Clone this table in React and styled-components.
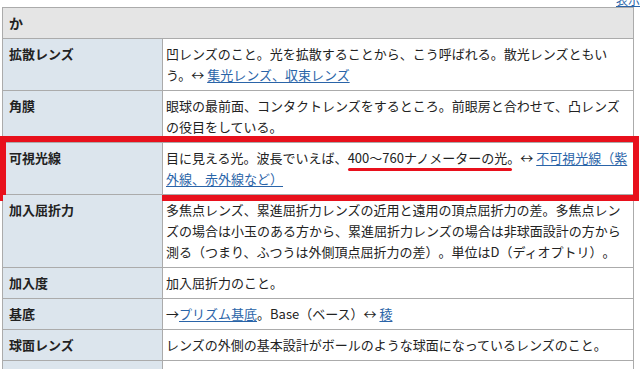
import React from "react";
import styled, { createGlobalStyle } from "styled-components";

const GlobalStyle = createGlobalStyle`
  html, body {
    margin: 0;
    padding: 0;
    overflow: hidden;
    background: #ffffff;
  }
  body {
    font-family: "Noto Sans CJK JP", "Noto Sans", sans-serif;
    color: #222222;
    text-spacing-trim: space-all;
  }
`;

const Page = styled.div`
  padding: 0 6px 0 2px;
`;

const TopBar = styled.div`
  height: 7px;
  display: flex;
  justify-content: flex-end;
  align-items: flex-end;
  overflow: hidden;
  margin-right: -6px;
`;

const TopLink = styled.a`
  font-size: 12px;
  line-height: 14px;
  color: #2a64a8;
  text-decoration: underline;
`;

const Table = styled.table`
  width: 632px;
  border-collapse: collapse;
  table-layout: fixed;
  font-size: 13px;
  line-height: 21px;
`;

const HeadCell = styled.th`
  background: #e5e5e5;
  border: 1px solid #ababab;
  text-align: left;
  font-size: 14px;
  font-weight: bold;
  padding: 5px 6px 4px;
`;

const Row = styled.tr``;

const LabelCell = styled.td`
  position: relative;
  background: #dce5ed;
  border: 1px solid #ababab;
  font-weight: bold;
  vertical-align: top;
  padding: 4px 6px 5px;
`;

const TextCell = styled.td`
  background: #ffffff;
  border: 1px solid #ababab;
  vertical-align: top;
  padding: 4px 5px 5px 3px;
`;

const Link = styled.a`
  color: #2a64a8;
  text-decoration: underline;
  text-underline-offset: 2px;
`;

const Marked = styled.span`
  position: relative;
  &::after {
    content: "";
    position: absolute;
    left: 0;
    right: 8px;
    bottom: -4px;
    height: 3px;
    border-radius: 2px;
    background: #e8101c;
  }
`;

/* red frame drawn over the whole highlighted row */
const Frame = styled.div`
  position: absolute;
  left: -3px;
  top: -7px;
  bottom: -7px;
  width: 627px;
  border: 6px solid #e8101c;
  pointer-events: none;
`;

const rows = [
  {
    label: "拡散レンズ",
    body: (
      <>
        凹レンズのこと。光を拡散することから、こう呼ばれる。散光レンズともいう。↔{" "}
        <Link href="#">集光レンズ、収束レンズ</Link>
      </>
    ),
  },
  {
    label: "角膜",
    body: "眼球の最前面、コンタクトレンズをするところ。前眼房と合わせて、凸レンズの役目をしている。",
  },
  {
    label: "可視光線",
    framed: true,
    body: (
      <>
        目に見える光。波長でいえば、<Marked>400〜760ナノメーターの光。</Marked>↔{" "}
        <Link href="#">不可視光線（紫外線、赤外線など）</Link>
      </>
    ),
  },
  {
    label: "加入屈折力",
    body: "多焦点レンズ、累進屈折力レンズの近用と遠用の頂点屈折力の差。多焦点レンズの場合は小玉のある方から、累進屈折力レンズの場合は非球面設計の方から測る（つまり、ふつうは外側頂点屈折力の差）。単位はD（ディオプトリ）。",
  },
  { label: "加入度", body: "加入屈折力のこと。" },
  {
    label: "基底",
    body: (
      <>
        →<Link href="#">プリズム基底</Link>。Base（ベース）↔ <Link href="#">稜</Link>
      </>
    ),
  },
  {
    label: "球面レンズ",
    body: "レンズの外側の基本設計がボールのような球面になっているレンズのこと。",
  },
  {
    label: "屈折率",
    body: "真空中の光の速さと、物質中の光の速さの比。",
  },
];

export default function App() {
  return (
    <>
      <GlobalStyle />
      <Page>
        <TopBar>
          <TopLink href="#">表示</TopLink>
        </TopBar>
        <Table>
          <colgroup>
            <col style={{ width: "160px" }} />
            <col />
          </colgroup>
          <thead>
            <tr>
              <HeadCell colSpan={2}>か</HeadCell>
            </tr>
          </thead>
          <tbody>
            {rows.map((r) => (
              <Row key={r.label}>
                <LabelCell>
                  {r.label}
                  {r.framed && <Frame />}
                </LabelCell>
                <TextCell>{r.body}</TextCell>
              </Row>
            ))}
          </tbody>
        </Table>
      </Page>
    </>
  );
}
